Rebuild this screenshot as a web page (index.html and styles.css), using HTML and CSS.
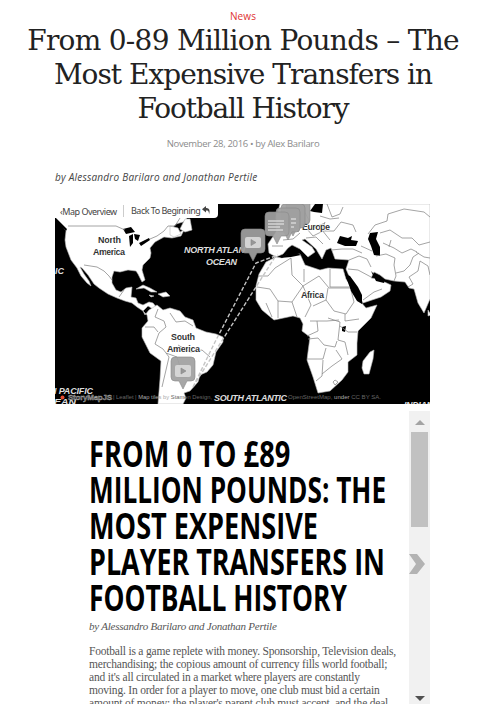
FILE: index.html
```html
<!DOCTYPE html>
<html lang="en">
<head>
<meta charset="utf-8">
<title>From 0-89 Million Pounds – The Most Expensive Transfers in Football History</title>
<link rel="stylesheet" href="styles.css">
</head>
<body>
<header class="post-header">
  <div class="category">News</div>
  <h1 class="title">
    <span class="h-a">From 0-89 Million Pounds – The</span>
    <span class="h-b">Most Expensive Transfers in</span>
    <span class="h-c">Football History</span>
  </h1>
  <div class="meta">November 28, 2016 • by Alex Barilaro</div>
</header>
<main class="content">
  <p class="byline">by Alessandro Barilaro and Jonathan Pertile</p>
  <section class="map">
    <svg class="world" viewBox="55 204 375 200" width="375" height="200">
      <defs>
        <g id="pin"><path d="M-8-12H8Q12-12 12-8V8Q12 12 8 12H4L0 20L-4 12H-8Q-12 12-12 8V-8Q-12-12-8-12Z"/></g>
      </defs>
      <rect x="55" y="204" width="375" height="200" fill="#000"/>
      <g class="land">
        <path d="M55 204H192L190 215 183 222 176 224 171 229 176 228 178 233 184 230 181 236 172 238 164 237 155 242 150 248 151 253 150 258 143 265 142 270 145 280 142 282 138 274 136 271 128 270 120 272 114 271 112 277 112 283 116 290 121 292 126 288 132 287 131 297 136 298 138 303 143 305 149 302 153 303 157 308 153 309 148 306 143 311 137 307 132 303 125 301 117 298 108 294 99 288 94 284 88 275 82 268 80 267 84 274 89 281 91 286 87 283 81 276 77 268 71 260 66 247 65 240 66 231 61 224 55 219Z"/>
        <path d="M185 219L190 219 192 230 185 232 180 229Z M170 226L178 228 181 234 174 237 170 235Z"/>
        <path d="M136 289L143 285 150 288 157 292 151 292 144 288Z M158 294L166 292 170 296 163 297Z M149 295L154 296 151 297Z"/>
        <path d="M143 311L145 315 149 310 157 305 163 310 170 308 180 311 185 317 193 320 196 328 206 332 216 334 223 337 223 342 216 352 213 365 207 372 200 375 198 382 190 391 184 393 186 398 183 404H158L160 379 161 361 150 353 142 337 142 328 148 321 147 315Z"/>
        <path d="M276 257L266 262 259 274 256 286 256 300 262 310 274 320 293 316 300 318 303 324 302 331 310 337 308 352 307 360 313 377 318 393 330 391 342 380 348 372 348 362 357 355 357 343 358 331 371 318 377 305 366 308 360 301 354 291 346 279 343 269 328 268 320 270 305 265 300 254 287 255 282 258Z"/>
        <path d="M363 361L370 352 374 350 373 359 369 374 364 374 362 368Z"/>
        <path d="M268 244L272 238 276 232 280 225 276 218 280 204H430V299L424 313 418 303 414 289 409 288 405 282 394 281 385 279 380 275 374 272 371 278 378 279 391 285 390 291 381 297 363 303 356 290 349 276 346 269 349 260 335 259 331 248 326 250 322 259 316 249 305 239 302 240 312 247 315 252 308 257 300 249 292 245 288 248 283 254 276 257 269 253Z"/>
        <path d="M428 310L431 315 428 316Z"/>
      </g>
      <g fill="#000">
        <path d="M337 243L340 236 348 238 352 236 351 240 358 241 356 246 345 246Z"/>
        <path d="M370 233L378 232 376 239 380 247 380 256 374 255 371 246 368 239Z"/>
        <path d="M310 211L315 204H323L322 213 314 212Z"/>
        <path d="M123 229L131 227 135 232 126 234Z M129 236L133 234 133 243 130 247Z M134 234L140 235 138 241 135 239Z M139 243L149 238 150 240 141 246Z"/>
        <path d="M342 327L346 326 345 332 342 331Z M55 217L67 229 66 231 55 220Z"/>
      </g>
      <g class="borders">
        <path d="M68 226H116L125 230M84 265L97 267 104 271 109 276 112 280M150 239L157 236 164 231 168 226 175 226 180 218M119 297L124 290"/>
        <path d="M158 309L155 317 164 321 166 327 159 333 155 344 163 349 169 357 166 370 162 387M145 327L154 327 158 332M170 313L176 322 185 321 193 326M178 345L190 352 202 350 210 357M166 353L177 357 181 370 176 377M176 377L187 377"/>
        <path d="M258 276L268 276 275 268 291 258 292 275 303 286 319 276 329 288 353 288M304 269V282M330 269V287H349M257 287L270 289 278 301 292 302 303 286M266 303L272 317M278 301V318M292 302L297 317M303 286L311 305 305 317M328 288L326 300 313 306M326 300L334 311 346 314 354 302 351 290M345 314V321L359 319M328 318L340 322 338 340M310 321H327L339 320M317 321L318 331 307 336M308 339L318 338 324 345 335 347 337 341M307 359H323L326 348M323 360L322 376 316 381M322 374L332 366 342 359 336 350M338 340L345 342 348 355M340 326L348 332 357 332M333 382L335 380 338 382 335 385Z"/>
        <path d="M304 211L309 220 307 229 313 236 323 231 334 231 341 222 353 225 356 232M320 216L330 219 339 218M325 222L322 230 330 240M306 238L316 237 323 244M327 204L332 217 340 214 343 207M313 228L325 223M331 250L342 249 353 249 362 253M349 260L359 256 367 259 371 267M348 269L358 270 371 277M363 300L374 292 382 289"/>
        <path d="M368 234L375 225 387 221 388 214 404 209 424 212 430 217M380 233L390 230 402 238 412 238 419 245 430 242M383 243L394 248 402 253 411 249 417 252M361 246L372 251M376 256L386 254 395 258 394 265 396 276 394 281M396 273L404 271 410 265 413 257 419 253M408 287L413 284 409 277 418 271 420 261 428 266 430 275M416 252L424 257 430 258M391 240L389 247M283 240L293 239 300 233M272 246L283 246"/>
      </g>
      <g fill="#000">
        <path d="M345 274L350 276 358 287 362 295 362 304 357 301 351 291Z M371 271L378 278 385 280 384 283 376 281Z M280 258L293 251 301 255 291 257Z"/>
      </g>
      <g class="route"><path d="M193 387L215 342 256 263 278 255M196 382L223 339 275 257"/></g>
      <g class="place">
        <text x="98" y="243" textLength="23">North</text><text x="93" y="255" textLength="32">America</text>
        <text x="171" y="340" textLength="24">South</text><text x="167" y="352" textLength="33">America</text>
        <text x="302" y="230" textLength="28">Europe</text><text x="301" y="298" textLength="23">Africa</text>
      </g>
      <g class="sea">
        <text x="184" y="253" textLength="61">NORTH ATLAN</text><text x="206" y="265" textLength="31">OCEAN</text>
        <text x="214" y="401" textLength="73">SOUTH ATLANTIC</text><text x="55" y="274">IC</text>
        <text x="54" y="394" textLength="39">I PACIFIC</text><text x="54" y="405" textLength="22" lengthAdjust="spacingAndGlyphs">EAN</text><text x="404" y="408" textLength="29">INDIAN</text>
      </g>
      <g class="pins">
        <use href="#pin" x="298" y="212"/><use href="#pin" x="293" y="216"/><use href="#pin" x="288" y="220"/>
        <use href="#pin" x="277" y="224"/><use href="#pin" x="253" y="241"/><use href="#pin" x="183" y="369"/>
        <path class="lines" d="M268 221H284M268 224H284M268 227H280M268 230H283M291 219H296M291 223H296M291 227H294"/>
        <g class="video"><rect x="245" y="237" width="16" height="11" rx="2"/><rect x="175" y="365" width="16" height="12" rx="2"/></g>
        <path fill="#929292" d="M251 239.500L256 242.500 251 245.500ZM181 368L186 371 181 374Z"/>
      </g>
      <circle cx="62.5" cy="397.5" r="2" fill="#e54b30"/>
      <g class="credits">
        <text class="brand" x="68" y="400" textLength="44">StoryMapJS</text>
        <text x="113" y="399" textLength="99" lengthAdjust="spacingAndGlyphs">| Leaflet | <tspan>Map tiles by</tspan> Stamen Design,</text>
        <text x="288" y="399" textLength="93" lengthAdjust="spacingAndGlyphs">OpenStreetMap, <tspan>under</tspan> CC BY SA.</text>
      </g>
    </svg>
    <nav class="toolbar">
      <span class="overview">‹Map Overview</span>
      <span class="back">Back To Beginning</span>
      <svg class="reply" viewBox="0 0 9 9" width="9" height="9"><path d="M4 0V2C7 2 8.500 4 7 8.500C7 5 6 4.500 4 4.500V6.500L0 3.300Z"/></svg>
    </nav>
  </section>
  <section class="story">
    <article class="copy">
      <h2 class="headline">
        <span class="s-a">FROM 0 TO £89</span>
        <span class="s-b">MILLION POUNDS: THE</span>
        <span class="s-c">MOST EXPENSIVE</span>
        <span class="s-d">PLAYER TRANSFERS IN</span>
        <span class="s-e">FOOTBALL HISTORY</span>
      </h2>
      <p class="author">by Alessandro Barilaro and Jonathan Pertile</p>
      <p class="body">Football is a game replete with money. Sponsorship, Television deals,<br>merchandising; the copious amount of currency fills world football;<br>and it's all circulated in a market where players are constantly<br>moving. In order for a player to move, one club must bid a certain<br>amount of money; the player's parent club must accept, and the deal</p>
    </article>
    <div class="scrollbar">
      <svg class="up" viewBox="0 0 10 5" width="10" height="5"><path d="M0 5L5 0L10 5Z"/></svg>
      <div class="thumb"></div>
      <svg class="next" viewBox="0 0 16 20" width="16" height="20"><path d="M0 0H8L16 10L8 20H0L7 10Z"/></svg>
      <svg class="down" viewBox="0 0 10 5" width="10" height="5"><path d="M0 0H10L5 5Z"/></svg>
    </div>
  </section>
</main>
</body>
</html>
```
FILE: styles.css
```css
* { box-sizing: border-box; }
body { margin: 0; height: 725px; overflow: hidden; background: #fff; font-family: "Open Sans", sans-serif; }
h1, h2, p { margin: 0; font-weight: 400; }
.post-header { height: 168px; padding-top: 10px; text-align: center; }
.category { height: 14px; font: 10px/13px "Open Sans", sans-serif; color: #e03232; letter-spacing: .1px; }
.title { font: 28px/34px "DejaVu Serif", serif; color: #222; }
.title span { display: block; white-space: nowrap; }
.h-a { letter-spacing: -.72px; }
.h-b { letter-spacing: -1px; }
.h-c { letter-spacing: -1.15px; }
.meta { margin-top: 11px; font-size: 9.5px; line-height: 14px; color: #8c8c8c; letter-spacing: -.33px; }
.content { width: 375px; margin-left: 55px; }
.byline { height: 36px; padding-top: 2px; font-size: 10px; line-height: 15px; font-style: italic; color: #444; letter-spacing: .22px; }
.map { position: relative; height: 200px; overflow: hidden; }
.world { display: block; }
.land { fill: #fff; stroke: #bbb; stroke-width: .6; }
.borders { fill: none; stroke: #858585; stroke-width: .75; }
.route { fill: none; stroke: #c4c4c4; stroke-width: 1.4; stroke-dasharray: 4 2; }
.place { font: bold 9px "Liberation Sans", sans-serif; fill: #333; stroke: #fff; stroke-width: 1.2; paint-order: stroke; }
.sea { font: italic bold 9px "Liberation Sans", sans-serif; fill: #ddd; }
.pins { fill: #a0a0a0; fill-opacity: .93; stroke: #888; stroke-width: .6; }
.pins .lines { stroke: #d5d5d5; stroke-width: 1.4; fill: none; }
.video { fill: #d8d8d8; stroke: none; }
.credits { font: 6px "Liberation Sans", sans-serif; fill: #666; }
.credits tspan { fill: #aaa; }
.credits .brand { font-size: 8px; font-weight: bold; fill: #555; stroke: #aaa; stroke-width: .4; }
.toolbar { position: absolute; top: 0; left: 0; display: flex; align-items: center; width: 163px; height: 14px; padding-left: 5px; border-radius: 0 0 4px 0; background: #fff; font: 9px/14px "Noto Sans", sans-serif; color: #444; }
.overview { width: 64px; height: 12px; line-height: 13px; border-right: 1px solid #ccc; letter-spacing: -.5px; white-space: nowrap; }
.back { width: 70px; margin-left: 7px; white-space: nowrap; letter-spacing: -.5px; }
.reply { margin-left: 1px; margin-top: -2px; fill: #444; }
.story { display: flex; height: 293px; margin-top: 7px; overflow: hidden; }
.copy { width: 354px; padding: 25px 0 0 34px; }
.headline { height: 180px; font: bold 36px/36px "Open Sans", sans-serif; color: #000; }
.headline span { display: block; width: max-content; white-space: nowrap; transform-origin: 0 50%; }
.s-a { transform: scaleX(.757); }
.s-b { transform: scaleX(.728); }
.s-c { transform: scaleX(.753); }
.s-d { transform: scaleX(.747); }
.s-e { transform: scaleX(.733); }
.author { margin-top: 3px; font: italic 11px/14px "Liberation Serif", serif; color: #555; letter-spacing: -.24px; }
.body { margin-top: 12px; width: max-content; font: 11.500px/13px "Liberation Serif", serif; color: #555; letter-spacing: -.2px; }
.scrollbar { display: flex; flex-direction: column; width: 21px; height: 293px; background: #f1f1f1; }
.up { margin: 9px 0 0 5.500px; fill: #a3a3a3; }
.thumb { width: 17px; height: 95px; margin: 7px 0 0 2px; background: #c1c1c1; }
.next { margin-top: 27px; fill: #b3b3b3; }
.down { margin: 122px 0 0 5.500px; fill: #505050; }
```
